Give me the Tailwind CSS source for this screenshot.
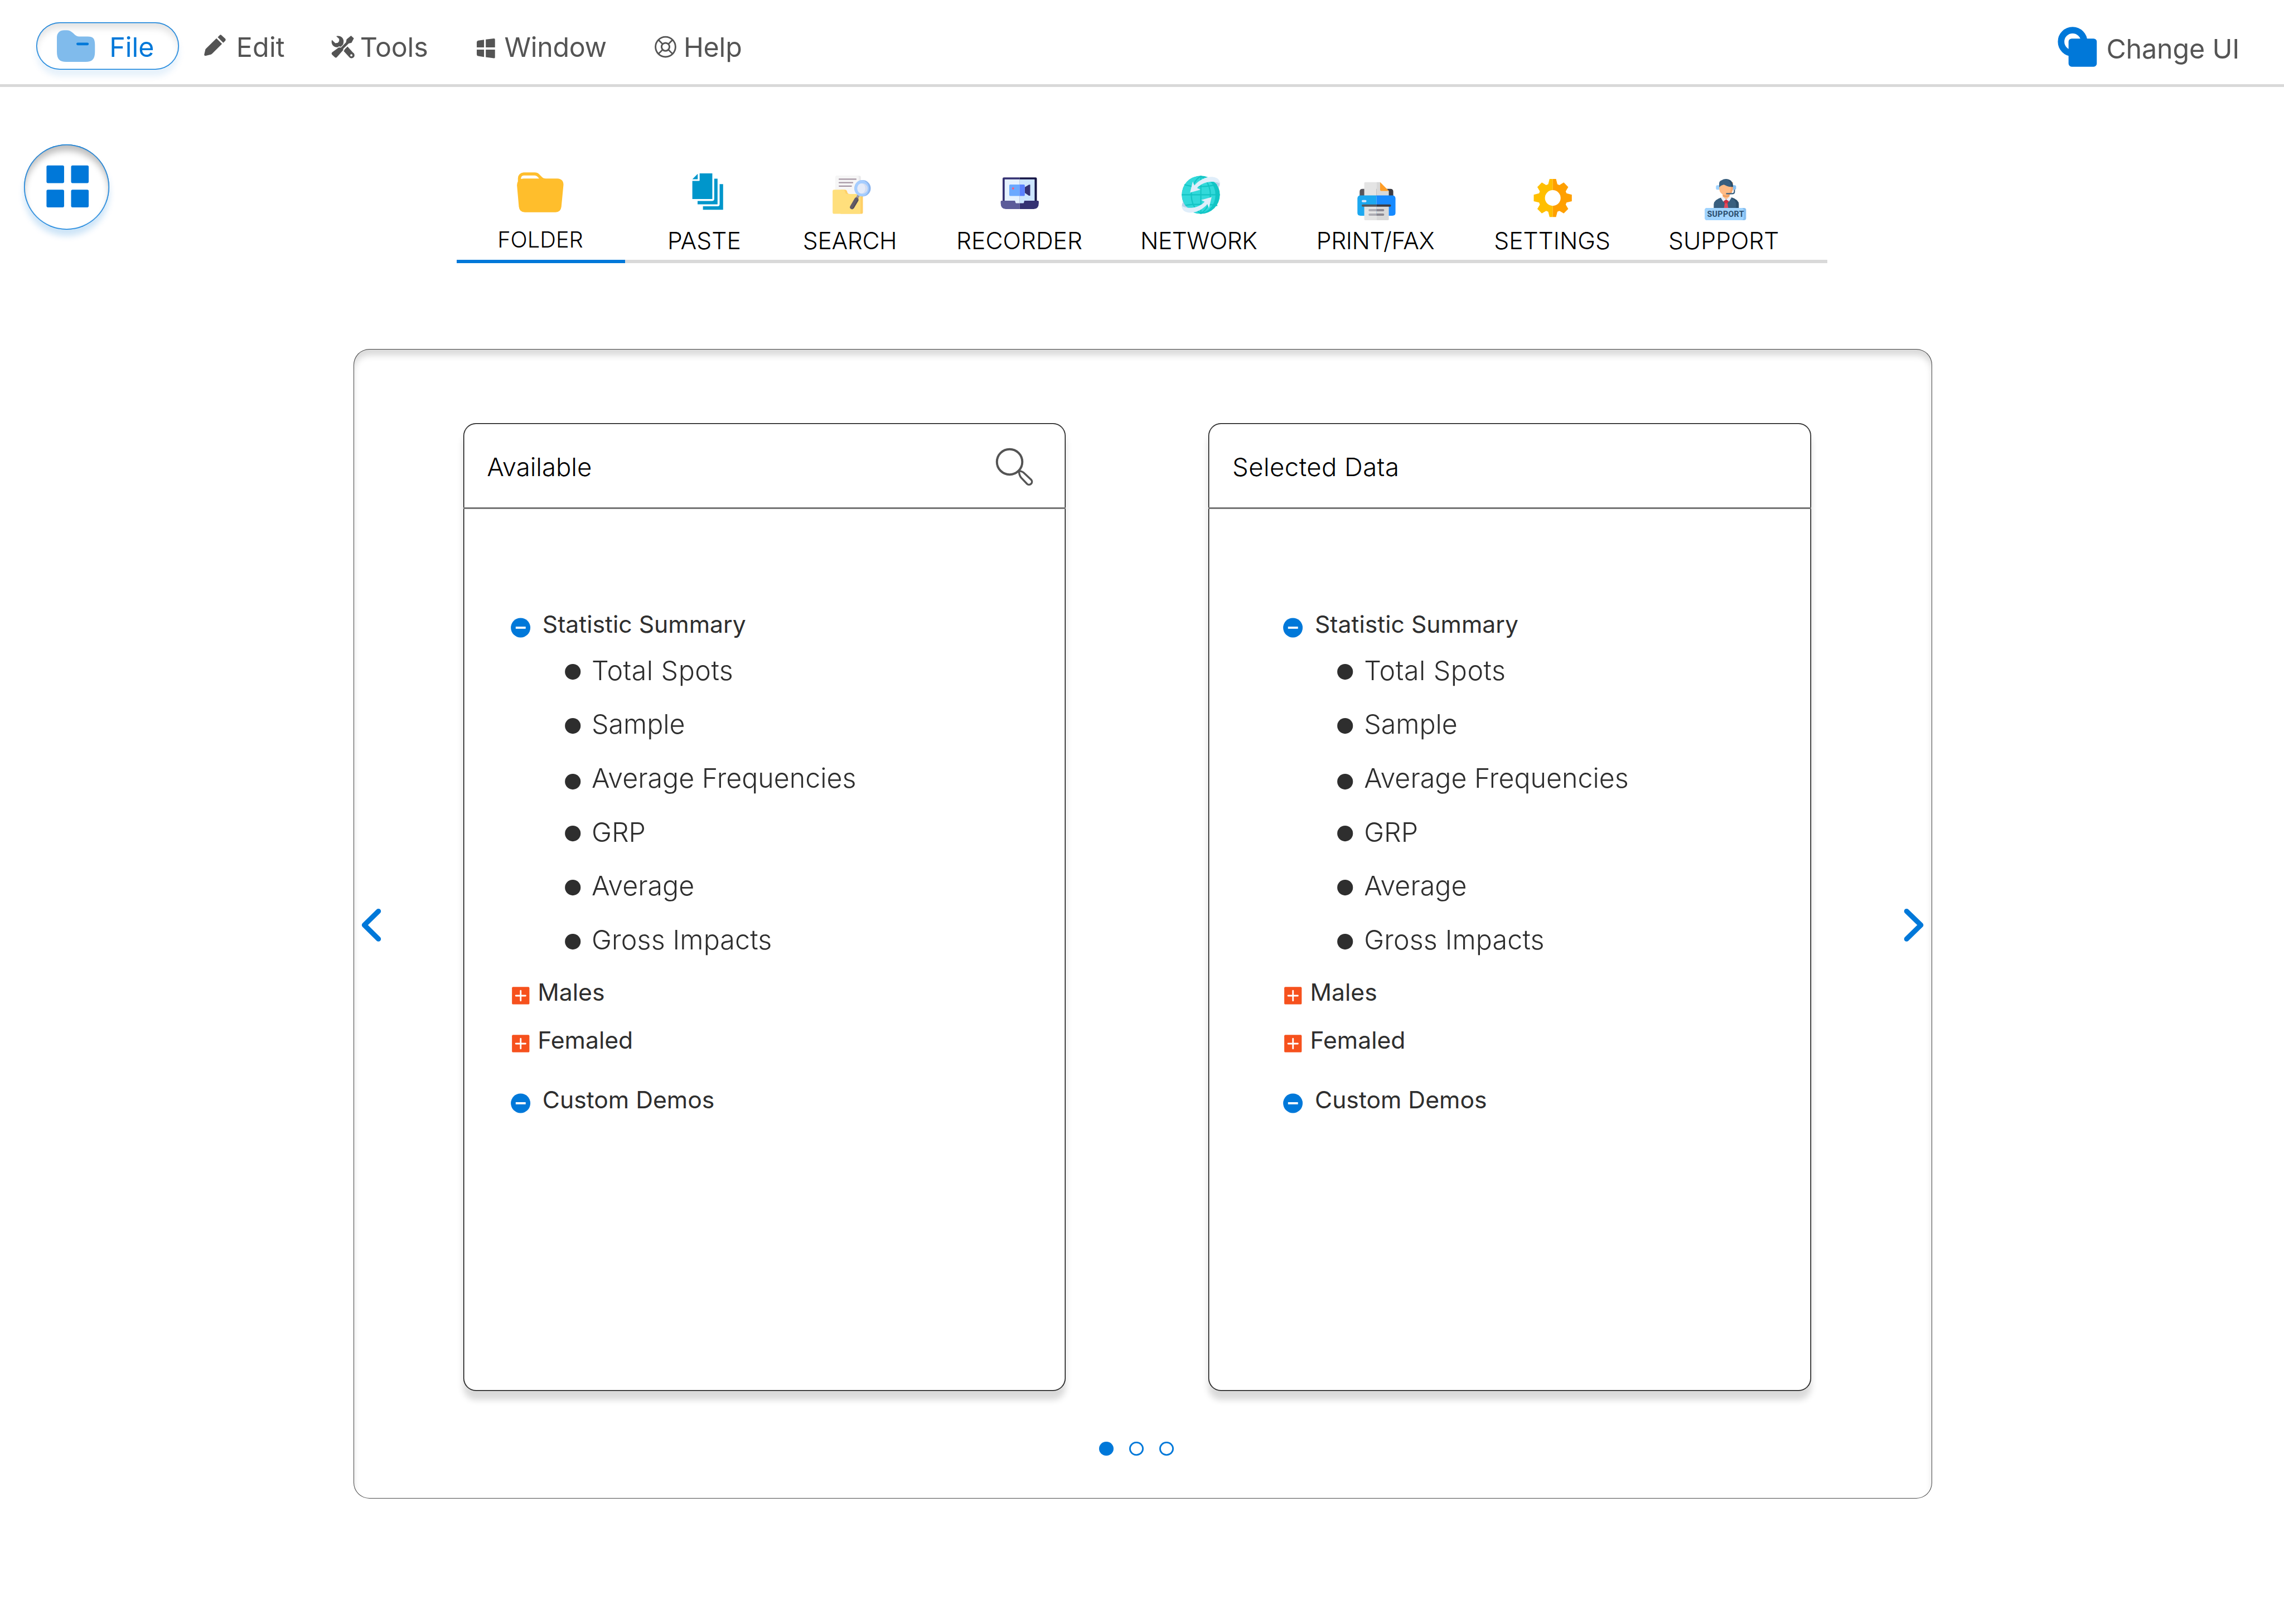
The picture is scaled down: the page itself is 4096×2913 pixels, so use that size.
<!DOCTYPE html>
<html lang="en" class="text-[1.11111vw]">
<head>
<meta charset="utf-8">
<title>Data selection</title>
<script src="https://cdn.jsdelivr.net/npm/@tailwindcss/browser@4"></script>
</head>
<body class="h-screen overflow-hidden bg-white font-['Inter',sans-serif] text-[#2e2e2e]">

<svg class="hidden">
  <symbol id="minus" viewBox="0 0 14 20"><circle cx="6.2" cy="12.3" r="6.15" fill="#0078d9"/><rect x="3.1" y="11.6" width="6.3" height="1.35" fill="#fff"/></symbol>
  <symbol id="plus" viewBox="0 0 14 20"><rect x=".75" y="6.8" width="11" height="11" rx=".7" fill="#f6511d"/><path d="M3.2 12.3h6.1M6.25 9.2v6.2" stroke="#fff" stroke-width="1" stroke-linecap="round"/></symbol>
  <symbol id="dot" viewBox="0 0 12 34"><circle cx="5" cy="18.3" r="4.95" fill="#2e2e2e"/></symbol>
</svg>

<!-- Menu bar -->
<header class="flex h-13.25 justify-between pt-3.5 text-[1.0625rem] leading-7.5 font-[380] text-[#545454]">
  <nav class="flex h-7.5 pl-5.75">
    <a class="mr-3.75 flex h-7.5 w-22.5 rounded-full text-[#0078d9] shadow-[inset_0_0_0_1px_#0078d9,inset_0_0_0_2px_rgba(0,120,217,.42),inset_0_0.25rem_0.25rem_rgba(0,0,0,.1),0_0.25rem_0.25rem_rgba(0,120,217,.1)]">
      <svg class="ml-3.25 h-7.5 w-6.25" viewBox="36 14 25 30"><path fill="#80bbec" d="M36 23.5C36 20.6 38 19 40.6 19H42.2C43.8 19 45 19.6 46.2 20.8L47.4 21.9C48.4 22.7 49.4 23 50.8 23H55.4C58.9 23 60 24.4 60 28.2V32.5C60 37.2 58.4 39 54 39H42C37.6 39 36 37.2 36 32.5Z"/><rect x="48.3" y="26.8" width="7.8" height="1.7" rx=".85" fill="#0078d9"/></svg>
      <span class="ml-2 pt-[0.05rem]">File</span>
    </a>
    <a class="flex w-20">
      <svg class="h-7.5 w-5" viewBox="128 14 20 30" fill="#545454"><path d="M138.6 22.1Q139.1 21.6 139.6 22.1L142.1 24.4Q142.6 25 142.1 25.6L140.8 26.9L137.3 23.4Z"/><path d="M136.5 24.1L140 27.6L133.8 33.8Q133.5 34.1 133 34.3L129.8 35.1Q128.7 35.2 128.8 34.3L129.5 31.2Q129.6 30.9 129.9 30.6Z"/></svg>
      <span class="ml-0.25 pt-[0.05rem] tracking-[0.005em]">Edit</span>
    </a>
    <a class="flex w-23">
      <svg class="h-7.5 w-4.5" viewBox="208 14 18 30" fill="#545454"><path d="M211.9 22.8C214.9 22 217.1 24.4 216.4 27C216.3 27.6 216.2 28.1 215.6 28.6L214.7 29.5C214.1 29.1 213.4 29.1 212.8 29.7C210.4 30 208.3 27.9 209.1 25.1L211.3 27.2L212.9 26.9L213.7 25.9L213.7 24.5Z"/><path d="M221.2 22.4L223 24.1L221.5 26.9L219.7 27.4L216.3 30.7L216.2 31.6L212.3 36Q211.6 36.7 210.9 36L209.2 34.4Q208.6 33.7 209.2 33L213.4 29.9L214.9 29.9L218 26.7L218.4 24.7Z"/><path fill-rule="evenodd" d="M217.3 31L219 29.3L222.4 33.1A1.9 1.9 0 1 1 219.9 35.8L216.6 32.2ZM221.4 34.1A.7.7 0 1 0 221.4 35.5A.7.7 0 1 0 221.4 34.1Z"/></svg>
      <span class="ml-0.25 pt-[0.05rem] tracking-[-0.003em]">Tools</span>
    </a>
    <a class="flex w-28">
      <svg class="h-7.5 w-4.5" viewBox="300 14 18 30" fill="#545454"><path d="M305.3 25V29.8H300.7V26.6Q300.7 25.7 301.6 25.55ZM306.4 24.8L311.6 24.2Q312.2 24.2 312.2 24.8V29.8H306.4ZM300.7 31.2H305.3V35.9L301.6 35.3Q300.7 35.1 300.7 34.2ZM306.4 31.2H312.2V36.1Q312.2 36.8 311.6 36.7L306.4 36Z"/></svg>
      <span class="pt-[0.05rem] tracking-[-0.007em]">Window</span>
    </a>
    <a class="flex">
      <svg class="h-7.5 w-4.5" viewBox="412 14 18 30" fill="none" stroke="#545454"><circle cx="419.55" cy="29.5" r="6.3"/><circle cx="419.55" cy="29.5" r="2.5" stroke-width="1.05"/><path stroke-width=".95" d="M415 25l2.8 2.8M424.1 25l-2.8 2.8M415 34l2.8-2.8M424.1 34l-2.8-2.8"/></svg>
      <span class="ml-0.25 pt-[0.05rem] tracking-[-0.004em]">Help</span>
    </a>
  </nav>
  <a class="flex w-35.75">
    <svg class="h-7.5 w-7.5" viewBox="1297 14 30 30"><circle cx="1306.8" cy="26.2" r="7.25" fill="none" stroke="#0078d9" stroke-width="4.1"/><rect x="1304.25" y="24.25" width="17.8" height="17.75" rx="2" fill="#0078d9"/></svg>
    <span class="ml-0.25 pt-[0.11rem] tracking-[-0.003em]">Change UI</span>
  </a>
</header>
<div class="h-0.5 bg-[#d9d9d9]"></div>

<!-- Launcher and ribbon tabs -->
<div class="flex pl-3.75 pt-9">
  <button class="h-13.5 w-13.5 rounded-full shadow-[inset_0_0_0_1px_#0078d9,inset_0_0_0_2px_rgba(0,120,217,.42),inset_0_0.25rem_0.25rem_rgba(0,0,0,.25),0_0.25rem_0.25rem_rgba(0,120,217,.2)]">
    <svg class="h-13.5 w-13.5" viewBox="15 91 54 54" fill="#0078d9"><rect x="29.2" y="104.3" width="11.1" height="11.1" rx=".9"/><rect x="44.7" y="104.3" width="11.1" height="11.1" rx=".9"/><rect x="29.2" y="119.6" width="11.1" height="11.1" rx=".9"/><rect x="44.7" y="119.6" width="11.1" height="11.1" rx=".9"/></svg>
  </button>
  <div class="ml-54.75 mt-2.25 w-216">
    <div class="flex h-16 text-center text-[0.9375rem] leading-4.75 font-[275] text-black [&_span]:pt-[0.02rem]">
      <div class="w-26.5">
        <svg class="block h-[2.58rem] w-26.5" viewBox="288 100 106 41.28"><path fill="#ffbe2c" fill-rule="evenodd" d="M326.6 114.6V112.7A3.7 3.7 0 0 1 330.2 108.9H337.2Q338.9 108.9 340 110L341.4 111.4Q342.6 112.75 344.2 112.75H351.4Q355.5 112.9 355.3 117L354 130.5Q353.6 134 350.3 134H331Q327.6 134 327.2 130.5L326 117Q326 115.5 326.6 114.6ZM328.5 113L330.2 112.75H340L338.8 111.4Q338.1 110.8 337.2 110.8H330.3Q328.5 111 328.5 113Z"/></svg>
        <span class="block pr-[0.04rem] text-[0.875rem]">FOLDER</span>
      </div>
      <div class="w-25">
        <svg class="block h-10.5 w-25" viewBox="394 100 100 42" fill="#0096cb"><path d="M441 109.5H449V125.7H436.4V114.25H440.6Q441 114.25 441 113.8ZM439.8 109.8V113.2H436.4ZM450.2 112.8H452.3V129H439.7V126.9H449Q450.2 126.8 450.2 125.7ZM453.6 116.25H455.8V132.4H443.1V130.25H452.4Q453.6 130.1 453.6 129Z"/></svg>
        <span class="block">PASTE</span>
      </div>
      <div class="w-20.75">
        <svg class="block h-10.5 w-20.75" viewBox="494 100 83 42"><rect x="526.8" y="111" width="16" height="14" rx="1" fill="#eaeaec"/><path fill="#f6f6f6" d="M527.8 111H540.5Q541.5 111 541.5 112V125H526.8V112Q526.8 111 527.8 111Z"/><path stroke="#a595a3" stroke-width=".8" stroke-linecap="round" d="M529.2 113.15H539.7M529.2 115.35H537.6M529.2 117.5H536.8"/><path fill="#ffcf66" d="M530 119.75H532.7Q533.7 119.75 534 120.6L534.4 121.8Q534.7 122.5 535.7 122.5H543.1Q544.1 122.5 544.1 123.5V134Q544.1 135 543.1 135H530Z"/><path fill="#ffdf7c" d="M526 119.75H531.4Q532.4 119.75 532.7 120.6L533.1 121.8Q533.4 122.5 534.4 122.5H541.6Q542.6 122.5 542.6 123.5V134Q542.6 135 541.6 135H526Q525 135 525 134V120.75Q525 119.75 526 119.75Z"/><path stroke="#9b949c" stroke-width="1.6" d="M541.6 122.8L540.4 125"/><path stroke="#625c66" stroke-width="2.6" stroke-linecap="round" d="M540 126L537.2 130.8"/><path stroke="#544e58" stroke-width=".8" stroke-linecap="round" d="M540.9 126.5L538.1 131.2"/><circle cx="543.9" cy="118.9" r="5.15" fill="#8bb4ed"/><ellipse cx="543.3" cy="118.9" rx="4.55" ry="5.1" fill="#a5cdff"/><circle cx="543.8" cy="119" r="3.3" fill="#d4ddf1"/><ellipse cx="543.1" cy="119" rx="2.5" ry="3.2" fill="#e4ebf9"/></svg>
        <span class="block pl-[0.04rem] tracking-[-0.009em]">SEARCH</span>
      </div>
      <div class="w-33">
        <svg class="block h-10.5 w-33" viewBox="577 100 132 42"><path fill="#343172" d="M633 112H643V128H632.2V112.8Q632.2 112 633 112Z"/><path fill="#151545" d="M643 112H653Q653.8 112 653.8 112.8V128H643Z"/><path fill="#e5f2ff" d="M633.5 113.3H643V128.6H633.5Z"/><path fill="#cce5ff" d="M643 113.3H652.4V128.6H643Z"/><path fill="#5c5c99" d="M631.5 126.75H640L640.4 128Q640.6 128.3 641 128.3H643V132H634.2Q631 132 631 128.2V127.3Q631 126.75 631.5 126.75Z"/><path fill="#343172" d="M654.5 126.75H645.9L645.6 128Q645.4 128.3 645 128.3H643V132H651.8Q655 132 655 128.2V127.3Q655 126.75 654.5 126.75Z"/><path fill="#343172" d="M646.2 118.2L648.8 116.6H649.6V123.6H648.8L646.2 121.8Z"/><path fill="#6ba9ff" d="M637 116.5H643V123.7H637Q636.4 123.7 636.4 123.1V117.1Q636.4 116.5 637 116.5Z"/><path fill="#5a81ff" d="M643 116.5H645.6Q646.2 116.5 646.2 117.1V123.1Q646.2 123.7 645.6 123.7H643Z"/><circle cx="638.8" cy="119" r=".7" fill="#ff5c77"/></svg>
        <span class="block pr-[0.04rem]">RECORDER</span>
      </div>
      <div class="w-[5.90625rem]">
        <svg class="block h-10.5 w-[5.90625rem]" viewBox="709 100 94.5 42"><circle cx="757" cy="123" r="12" fill="#12c5c5"/><ellipse cx="755.6" cy="123" rx="10.6" ry="11.7" fill="#32d9da"/><path fill="none" stroke="#13c4c4" stroke-width=".75" d="M745 123H769M757 111V135M757 111.2C749 116 749 130 757 134.8M757 111.2C765 116 765 130 757 134.8M746.6 116.6C752 118.3 761 118.3 767.4 116.4M746.6 129.8C752 128.7 761 128.7 767.4 129.8"/><g id="swoosh"><path fill="#b9d3e9" d="M765 114.8L769 115.2Q769.2 117 768.1 118.8Q767.4 116 765 114.8Z"/><path fill="#e0eefa" d="M750.2 121.6L751.9 114.6L752.9 117.1C756 113.6 760.3 111.6 763.8 111.7C767 111.8 769.1 113.3 769 116C767.5 114.8 764.3 114.6 762 114.9C759.2 115.3 756.5 116.5 754.6 118.7L756.8 119.75Z"/></g><use href="#swoosh" transform="rotate(180 757 123)"/></svg>
        <span class="block pr-[0.06rem] tracking-[-0.013em]">NETWORK</span>
      </div>
      <div class="w-[8.03125rem]">
        <svg class="block h-10.5 w-[8.03125rem]" viewBox="803.5 100 128.5 42"><path fill="#57565c" d="M868 119.25H859.2Q857.4 119.25 857.4 121V124H868Z"/><path fill="#3c3b41" d="M868 119.25H876.8Q878.6 119.25 878.6 121V124H868Z"/><path fill="#e4e4e4" d="M868 115H860.9Q860.3 115 860.3 115.6V124H868Z"/><path fill="#d8d8d8" d="M868 115H870.3L875.8 120.6V124H868Z"/><path fill="#ff9d26" d="M870.3 115L875.8 120.6H871Q870.3 120.6 870.3 119.9Z"/><path fill="#1ca8f0" d="M868 123.4H858Q856 123.4 856 125.4V134.5Q856 136.2 858 136.2H868Z"/><path fill="#178aff" d="M868 123.4H878Q880 123.4 880 125.4V134.5Q880 136.2 878 136.2H868Z"/><rect x="858.7" y="126.25" width="3" height="1.45" rx=".7" fill="#dce6fb"/><path fill="#e4e4e4" d="M868 130H860.3V138.4Q860.3 139 860.9 139H868Z"/><path fill="#d8d8d8" d="M868 130H875.8V138.4Q875.8 139 875.2 139H868Z"/><path fill="#57565c" d="M868 129.1H859.4A.7.7 0 0 0 859.4 130.5H868Z"/><path fill="#3c3b41" d="M868 129.1H876.5A.7.7 0 0 1 876.5 130.5H868Z"/><path fill="#aeadb4" d="M868 132H863.7A.7.7 0 0 0 863.7 133.4H868ZM868 134.8H863.7A.7.7 0 0 0 863.7 136.2H868Z"/><path fill="#8b8892" d="M868 132H872.2A.7.7 0 0 1 872.2 133.4H868ZM868 134.8H872.2A.7.7 0 0 1 872.2 136.2H868Z"/></svg>
        <span class="block pr-[0.07rem] tracking-[-0.01em]">PRINT/FAX</span>
      </div>
      <div class="w-[5.83rem]">
        <svg class="block h-10.5 w-[5.83rem]" viewBox="932 100 93.28 42"><g transform="translate(979 125)"><path fill="#ffbf00" d="M0-12H-2.05L-2.9-8.65L-4.2-8.15L-6.9-9.75L-9.75-6.9L-8.15-4.2L-8.65-2.9L-12-2.05V2.05L-8.65 2.9L-8.15 4.2L-9.75 6.9L-6.9 9.75L-4.2 8.15L-2.9 8.65L-2.05 12H0V4.95A4.95 4.95 0 0 1 0-4.95Z"/><path fill="#ff9f00" d="M0-12H2.05L2.9-8.65L4.2-8.15L6.9-9.75L9.75-6.9L8.15-4.2L8.65-2.9L12-2.05V2.05L8.65 2.9L8.15 4.2L9.75 6.9L6.9 9.75L4.2 8.15L2.9 8.65L2.05 12H0V4.95A4.95 4.95 0 0 0 0-4.95Z"/></g></svg>
        <span class="block">SETTINGS</span>
      </div>
      <div class="w-[7.69rem]">
        <svg class="block h-10.5 w-[7.69rem]" viewBox="1025.3 100 123 42"><path fill="#2c4f6c" d="M1090 124.7H1092Q1096.4 126 1096.4 129V132H1090Z"/><path fill="#385f7f" d="M1085.4 124.7H1091Q1094.6 126 1094.6 129V132H1080.6V129Q1080.8 126 1085.4 124.7Z"/><path fill="#ffbb85" d="M1086.3 121H1090.5V124.5L1088.4 126.2L1086.3 124.5Z"/><path fill="#ef9c5c" d="M1086.3 122.5H1090.5V124Q1088.4 124.8 1086.3 124Z"/><path fill="#e8eef9" d="M1086.3 124.1L1088.4 126L1086.6 127.3L1085 124.8ZM1090.5 124.1L1088.4 126L1090.2 127.3L1091.8 124.8Z"/><path fill="#e34b5c" d="M1087.7 127.5H1089.1L1089.8 131.5H1087Z"/><path fill="#d13044" d="M1088.4 126L1090.1 127L1089.3 128.4H1087.5L1086.8 127Z"/><rect x="1082" y="117" width="3" height="2.8" rx=".9" fill="#9ed3ff"/><rect x="1091.8" y="117" width="2.9" height="2.8" rx=".9" fill="#87bff0"/><path fill="#f5a870" d="M1088 115H1092.7V119.5Q1092 123.6 1088.4 123.6Z"/><path fill="#ffbb85" d="M1084 116H1091.3V119.5Q1090.5 123.5 1088 123.5Q1084.2 122.7 1084 119Z"/><path fill="#2c4f6c" d="M1088 113Q1092.9 113.2 1092.8 118Q1090.6 118.2 1088.6 117.2Z"/><path fill="#385f7f" d="M1084 118.3V116Q1084 114.3 1085.6 113.8Q1086.9 112.9 1088.4 113Q1091.3 113.6 1091.5 118Q1089 117.8 1087 116.6Q1085 117 1084 118.3Z"/><path fill="none" stroke="#385f7f" stroke-width=".75" d="M1093.6 119.8V121.2Q1093.5 122.3 1092.3 122.3H1088.4"/><rect x="1075" y="131.25" width="26" height="7.75" rx="1.3" fill="#87bff0"/><path fill="#a0d4ff" d="M1076.3 131.25H1098.2Q1099.4 131.5 1099.4 132.6V137.7Q1099.4 138.8 1098.2 139H1076.3Q1075 139 1075 137.7V132.5Q1075 131.25 1076.3 131.25Z"/><text x="1076.4" y="136.9" font-size="5" font-weight="800" textLength="23.3" fill="#2f5272" font-family="Roboto, sans-serif">SUPPORT</text></svg>
        <span class="block">SUPPORT</span>
      </div>
    </div>
    <div class="h-0.5 bg-[#d9d9d9]"><div class="h-full w-26.5 bg-[#0078d9]"></div></div>
  </div>
</div>

<!-- Carousel panel -->
<main class="ml-55.75 mt-13.5 h-181.25 w-248.75 rounded-[0.625rem] pt-11.75 shadow-[inset_0_0_0_1px_rgba(0,0,0,.71),inset_0_0.25rem_0.25rem_rgba(0,0,0,.15)]">
  <div class="flex h-152.5">
    <svg class="h-152.5 w-17.25" viewBox="223 267 69 610"><path fill="none" stroke="#0078d9" stroke-width="3.2" stroke-linecap="round" stroke-linejoin="round" d="M238.7 574.8L229.8 583.5L238.7 592.3"/></svg>

    <section class="w-95 rounded-lg shadow-[inset_0_0_0_1px_#000,inset_0_0_0_2px_rgba(0,0,0,.42),0_0.33rem_0.25rem_rgba(0,0,0,.15)]">
      <div class="flex h-13.25 justify-between pl-3.75 text-base leading-13.25 font-light text-black">
        <h2 class="pt-[0.07rem]">Available</h2>
        <svg class="h-13.25 w-12" viewBox="624 267 48 53" fill="none" stroke="#545454"><circle cx="636.5" cy="291.4" r="8" stroke-width="1.4"/><path stroke-width="1.2" stroke-linejoin="round" d="M642.4 297.2C643.8 297.2 645 297.8 646 298.8L650.2 302.8A1.85 1.85 0 0 1 647.6 305.4L643.7 301.3C642.8 300.2 642.5 299 642.4 297.2Z"/></svg>
      </div>
      <div class="h-[0.0625rem] bg-[#737373]"></div>
      <div class="pl-7.5 pt-[3.916rem] text-[0.9375rem] leading-5 font-[380] [&_span]:pt-[0.025rem]">
        <div class="flex h-5"><svg class="h-5 w-3.5"><use href="#minus"/></svg><span class="ml-1.5">Statistic Summary</span></div>
        <ul class="mt-[0.116rem] pl-8.5 text-[1.0625rem] leading-8.5 font-light">
          <li class="flex h-8.5"><svg class="h-8.5 w-3"><use href="#dot"/></svg><span class="ml-1.25 tracking-[0.01em]">Total Spots</span></li>
          <li class="flex h-8.5"><svg class="h-8.5 w-3"><use href="#dot"/></svg><span class="ml-1.25">Sample</span></li>
          <li class="flex h-8.5"><svg class="mt-[0.08rem] h-8.5 w-3"><use href="#dot"/></svg><span class="ml-1.25">Average Frequencies</span></li>
          <li class="flex h-8.5"><svg class="h-8.5 w-3"><use href="#dot"/></svg><span class="ml-1.25">GRP</span></li>
          <li class="flex h-8.5"><svg class="h-8.5 w-3"><use href="#dot"/></svg><span class="ml-1.25">Average</span></li>
          <li class="flex h-8.5"><svg class="h-8.5 w-3"><use href="#dot"/></svg><span class="ml-1.25 tracking-[0.003em]">Gross Impacts</span></li>
        </ul>
        <div class="mt-[0.372rem] flex h-5"><svg class="h-5 w-3.5"><use href="#plus"/></svg><span class="ml-0.75">Males</span></div>
        <div class="mt-[0.65rem] flex h-5"><svg class="h-5 w-3.5"><use href="#plus"/></svg><span class="ml-0.75">Femaled</span></div>
        <div class="mt-[1.106rem] flex h-5"><svg class="h-5 w-3.5"><use href="#minus"/></svg><span class="ml-1.5">Custom Demos</span></div>
      </div>
    </section>

    <section class="ml-22.5 w-95 rounded-lg shadow-[inset_0_0_0_1px_#000,inset_0_0_0_2px_rgba(0,0,0,.42),0_0.33rem_0.25rem_rgba(0,0,0,.15)]">
      <div class="flex h-13.25 pl-3.75 text-base leading-13.25 font-light text-black">
        <h2 class="pt-[0.07rem] tracking-[0.009em]">Selected Data</h2>
      </div>
      <div class="h-[0.0625rem] bg-[#737373]"></div>
      <div class="pl-11.75 pt-[3.916rem] text-[0.9375rem] leading-5 font-[380] [&_span]:pt-[0.025rem]">
        <div class="flex h-5"><svg class="h-5 w-3.5"><use href="#minus"/></svg><span class="ml-1.5">Statistic Summary</span></div>
        <ul class="mt-[0.116rem] pl-8.5 text-[1.0625rem] leading-8.5 font-light">
          <li class="flex h-8.5"><svg class="h-8.5 w-3"><use href="#dot"/></svg><span class="ml-1.25 tracking-[0.01em]">Total Spots</span></li>
          <li class="flex h-8.5"><svg class="h-8.5 w-3"><use href="#dot"/></svg><span class="ml-1.25">Sample</span></li>
          <li class="flex h-8.5"><svg class="mt-[0.08rem] h-8.5 w-3"><use href="#dot"/></svg><span class="ml-1.25">Average Frequencies</span></li>
          <li class="flex h-8.5"><svg class="h-8.5 w-3"><use href="#dot"/></svg><span class="ml-1.25">GRP</span></li>
          <li class="flex h-8.5"><svg class="h-8.5 w-3"><use href="#dot"/></svg><span class="ml-1.25">Average</span></li>
          <li class="flex h-8.5"><svg class="h-8.5 w-3"><use href="#dot"/></svg><span class="ml-1.25 tracking-[0.003em]">Gross Impacts</span></li>
        </ul>
        <div class="mt-[0.372rem] flex h-5"><svg class="h-5 w-3.5"><use href="#plus"/></svg><span class="ml-0.75">Males</span></div>
        <div class="mt-[0.65rem] flex h-5"><svg class="h-5 w-3.5"><use href="#plus"/></svg><span class="ml-0.75">Femaled</span></div>
        <div class="mt-[1.106rem] flex h-5"><svg class="h-5 w-3.5"><use href="#minus"/></svg><span class="ml-1.5">Custom Demos</span></div>
      </div>
    </section>

    <svg class="h-152.5 w-19" viewBox="1142 267 76 610"><path fill="none" stroke="#0078d9" stroke-width="3.2" stroke-linecap="round" stroke-linejoin="round" d="M1202.2 574.8L1211.2 583.5L1202.2 592.3"/></svg>
  </div>
  <div class="flex gap-2.5 pl-117.5 pt-8">
    <span class="h-2.25 w-2.25 rounded-full bg-[#0078d9]"></span>
    <span class="h-2.25 w-2.25 rounded-full shadow-[inset_0_0_0_0.0625rem_#0078d9]"></span>
    <span class="h-2.25 w-2.25 rounded-full shadow-[inset_0_0_0_0.0625rem_#0078d9]"></span>
  </div>
</main>
</body>
</html>
